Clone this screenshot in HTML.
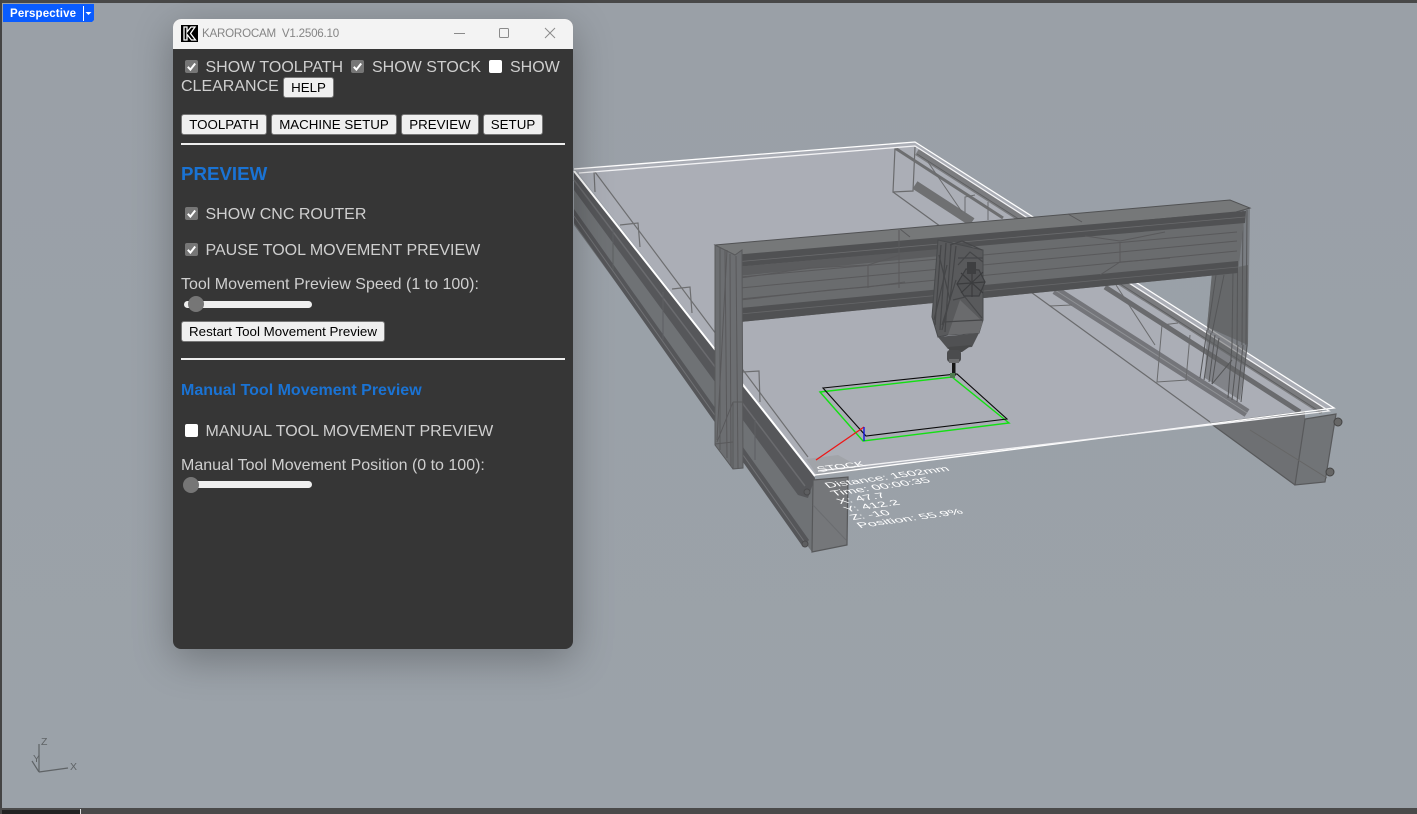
<!DOCTYPE html>
<html><head><meta charset="utf-8"><title>KAROROCAM</title>
<style>
html,body{margin:0;padding:0;width:1417px;height:814px;overflow:hidden;background:#9ba1a8;font-family:"Liberation Sans",Arial,sans-serif}
.abs,.t,.b,.cb{position:absolute}
.t{white-space:nowrap;font-size:16px;line-height:18px;color:#cfcfcf}
.b{box-sizing:border-box;background:#efefef;border:1px solid #767676;border-radius:3px;color:#000;font-size:13.33px;height:20px;line-height:18px;text-align:center;white-space:nowrap}
.cb{width:13px;height:13px;border-radius:2px;background:#767676}
.cb.off{background:#fff}
.cb svg{position:absolute;left:0;top:0}
.track{position:absolute;left:184px;width:128px;height:7px;border-radius:4px;background:#efefef}
.thumb{position:absolute;width:16px;height:16px;border-radius:50%;background:#767676}
hr{position:absolute;left:181px;width:384px;height:2px;margin:0;border:0;background:#eee}
</style></head><body>
<svg class="abs" style="left:0;top:0" width="1417" height="814" viewBox="0 0 1417 814">
<defs>
<linearGradient id="bg" x1="0" y1="0" x2="0" y2="1"><stop offset="0" stop-color="#9aa0a7"/><stop offset="1" stop-color="#9ba2a9"/></linearGradient>
</defs>
<rect width="1417" height="814" fill="url(#bg)"/>
<!-- table top -->
<polygon points="574,168 915,142 1333,408 815,475" fill="#abaeb6"/>
<!-- back right rail -->
<g fill="none" stroke="#6a6b6d">
<polyline points="895,148 893,192 913,191 915,147" stroke-width="1.2"/>
<line x1="893" y1="192" x2="1210" y2="422" stroke-width="1.2"/>
<line x1="895" y1="148" x2="1003" y2="218" stroke-width="3" stroke="#6d6e70"/>
<line x1="1105" y1="287" x2="1300" y2="412" stroke-width="5" stroke="#6a6b6e"/>
<line x1="915" y1="185" x2="972" y2="222" stroke-width="9" stroke="#6f7072"/>
<line x1="1055" y1="290" x2="1247" y2="413" stroke-width="9" stroke="#74757a"/>
<line x1="1055" y1="290" x2="1247" y2="413" stroke-width="1" stroke="#8f9195"/>
<line x1="917" y1="152" x2="1322" y2="411" stroke-width="7" stroke="#7b7c7f"/>
<line x1="917" y1="154" x2="1322" y2="413" stroke-width="1" stroke="#5e5f61"/>
<line x1="928" y1="162" x2="962" y2="212" stroke-width="1"/>
<line x1="1116" y1="285" x2="1155" y2="345" stroke-width="1"/>
<polyline points="965,213 965,197 975,195" stroke-width="1"/>
<line x1="988" y1="202" x2="988" y2="220" stroke-width="1"/>
<polyline points="1050,305 1050,306 1072,305" stroke-width="1"/>
<polyline points="1162,325 1157,382 1187,380" stroke-width="1"/>
<line x1="1162" y1="325" x2="1178" y2="323" stroke-width="1"/>
<line x1="1190" y1="335" x2="1186" y2="380" stroke-width="1"/>
</g>
<!-- right rail below table -->
<polygon points="1210,423 1305,411 1305,420 1295,485" fill="#6e7073"/>
<line x1="1210" y1="423" x2="1295" y2="485" stroke="#58595b" stroke-width="1.2"/>
<polygon points="1305,419 1336,414 1325,482 1295,485" fill="#717477" stroke="#58595b" stroke-width="1.2"/>
<circle cx="1338" cy="422" r="4" fill="#666" stroke="#444"/>
<circle cx="1330" cy="472" r="4" fill="#666" stroke="#444"/>
<line x1="1250" y1="430" x2="1327" y2="478" stroke="#666" stroke-width="1"/>
<!-- left rail -->
<polygon points="574,170 815,478 812,552 574,225" fill="#6f7275"/>
<polygon points="574,172 815,478 808,498 798,495 574,190" fill="#56575a"/>
<line x1="574" y1="180" x2="805" y2="486" stroke="#6a6b6e" stroke-width="1.5"/>
<polygon points="574,209 809,540 803,547 574,223" fill="#555659"/>
<line x1="574" y1="216" x2="806" y2="544" stroke="#707174" stroke-width="1"/>
<polyline points="613,228 613,270" stroke="#5d5f62" fill="none"/>
<polyline points="663,292 663,340" stroke="#5d5f62" fill="none"/>
<polyline points="755,420 755,460" stroke="#5d5f62" fill="none"/>
<polygon points="813,480 848,477 847,545 812,552" fill="#75777a" stroke="#57585a" stroke-width="1.2"/>
<line x1="813" y1="505" x2="846" y2="540" stroke="#6a6c6f"/>
<circle cx="807" cy="492" r="3" fill="#5d5e60" stroke="#4a4a4c"/>
<circle cx="805" cy="544" r="3" fill="#5d5e60" stroke="#4a4a4c"/>
<!-- inner left box lines -->
<g fill="none" stroke="#6d6e70" stroke-width="1.2">
<line x1="595" y1="172" x2="808" y2="457"/>
<polyline points="594,171 595,192"/>
<polyline points="620,225 638,223 640,247"/>
<polyline points="672,289 690,287 692,313"/>
<polyline points="743,372 759,371 760,402"/>
</g>
<!-- stock patch -->
<polygon points="806,459 838,455 865,470 818,476" fill="#a1a4a9"/>
<!-- table white edges -->
<g fill="none" stroke="#fff">
<polyline points="574,169 915,142 1334,408 815,475" stroke-width="1.3"/>
<polyline points="579,173 915,146 1329,411 818,471" stroke-width="1.3" stroke="#f2f2f4"/>
</g>
<line x1="574" y1="171" x2="815" y2="476" stroke="#fff" stroke-width="2"/>
<!-- right leg -->
<polygon points="1236,210 1250,208 1248,345 1240,400 1205,378 1207,327 1212,275" fill="#5f6063" fill-opacity=".55"/>
<polygon points="1212,272 1248,265 1248,345 1207,327" fill="#66686a"/>
<g stroke="#555658" stroke-width="1" fill="none">
<line x1="1238" y1="212" x2="1237" y2="345"/><line x1="1243" y1="210" x2="1242" y2="345"/>
<line x1="1247" y1="210" x2="1246" y2="345"/><line x1="1233" y1="270" x2="1232" y2="345"/>
<line x1="1216" y1="275" x2="1208" y2="330"/><line x1="1224" y1="275" x2="1212" y2="333"/>
<line x1="1207" y1="330" x2="1200" y2="378"/><line x1="1211" y1="333" x2="1204" y2="380"/>
<line x1="1215" y1="335" x2="1209" y2="382"/><line x1="1219" y1="338" x2="1212" y2="384"/>
<line x1="1238" y1="345" x2="1232" y2="400"/><line x1="1243" y1="345" x2="1237" y2="402"/>
<line x1="1247" y1="345" x2="1241" y2="402"/><line x1="1232" y1="345" x2="1228" y2="398"/>
<line x1="1212" y1="384" x2="1232" y2="360"/>
</g>
<!-- gantry beam -->
<polygon points="715,245 1230,200 1250,208 1236,212 735,258" fill="#767879" stroke="#515254"/>
<polygon points="735,258 1245,212 1238,273 740,322" fill="#6a6c6e"/>
<polygon points="733,255 1246,211 1245,223 735,267" fill="#505153"/>
<line x1="735" y1="262" x2="1245" y2="217" stroke="#6a6b6d" stroke-width=".8"/>
<polygon points="735,267 940,249 940,256 737,276" fill="#5b5c5e"/>
<polygon points="740,308 1238,261 1238,273 740,322" fill="#505153"/>
<line x1="740" y1="314" x2="1238" y2="267" stroke="#656668" stroke-width=".8"/>
<g stroke="#59595b" stroke-width="1" fill="none">
<line x1="740" y1="277" x2="1237" y2="232"/><line x1="740" y1="288" x2="1237" y2="241"/>
<line x1="740" y1="299" x2="1237" y2="251"/>
<polyline points="740,278 810,268 868,265 900,255"/>
<polyline points="740,300 830,290 868,287 905,282"/>
<line x1="868" y1="265" x2="868" y2="288"/>
<line x1="899" y1="230" x2="899" y2="288"/>
<line x1="1120" y1="242" x2="1120" y2="262"/>
<polyline points="1085,236 1120,241 1165,232"/>
<polyline points="1100,275 1120,262 1170,258"/>
<line x1="900" y1="229" x2="910" y2="237"/>
<line x1="1068" y1="214" x2="1082" y2="222"/>
</g>
<!-- left leg -->
<polygon points="715,245 735,255 742,250 743,468 733,469 715,445" fill="#6c6e71" stroke="#58595b"/>
<g stroke="#59595b" stroke-width="1" fill="none">
<line x1="720" y1="248" x2="720" y2="450"/><line x1="725" y1="250" x2="727" y2="458"/>
<line x1="730" y1="254" x2="731" y2="466"/><line x1="736" y1="256" x2="738" y2="468"/>
<line x1="727" y1="250" x2="717" y2="440"/><line x1="733" y1="402" x2="743" y2="402"/>
<line x1="733" y1="402" x2="717" y2="442"/><line x1="733" y1="402" x2="733" y2="469"/>
<line x1="715" y1="444" x2="733" y2="442"/>
</g>
<!-- spindle -->
<polygon points="938,240 983,250 983,320 979,333 948,335 938,337 932,317" fill="#595a5c" stroke="#484a4c"/>
<polygon points="960,300 983,322 979,333 948,335" fill="#6a6b6d"/>
<polygon points="938,337 979,333 972,347 948,349" fill="#505153"/>
<polygon points="948,347 972,345 962,352 950,352" fill="#474849"/>
<g stroke="#454648" stroke-width="1.2" fill="none">
<line x1="941" y1="245" x2="935" y2="325"/><line x1="946" y1="243" x2="940" y2="330"/>
<line x1="951" y1="245" x2="945" y2="332"/><line x1="956" y1="246" x2="950" y2="300"/>
<line x1="939" y1="255" x2="950" y2="300"/><line x1="947" y1="265" x2="934" y2="320"/>
<line x1="951" y1="295" x2="942" y2="330"/><line x1="956" y1="280" x2="942" y2="325"/>
<polyline points="953,300 965,297 982,318"/>
<line x1="943" y1="322" x2="982" y2="320"/>
<polyline points="950,245 962,241 982,250"/>
<polyline points="958,265 970,252 983,262"/>
<line x1="958" y1="258" x2="983" y2="258"/>
</g>
<polygon points="966,269 979,270 985,282 979,296 964,296 957,284" fill="#515254" stroke="#3d3e40" stroke-width="1.2"/>
<g stroke="#3b3c3e" stroke-width="1.2"><line x1="957" y1="284" x2="985" y2="282"/><line x1="972" y1="268" x2="972" y2="297"/><line x1="961" y1="273" x2="983" y2="293"/><line x1="983" y1="272" x2="961" y2="293"/></g>
<rect x="967" y="262" width="9" height="12" fill="#3e3f41"/>
<rect x="947" y="350" width="14" height="12" rx="3" fill="#4b4c4e"/>
<rect x="949" y="359" width="10" height="4" fill="#6a6b6d"/>
<rect x="952" y="363" width="3.5" height="13" fill="#161616"/>
<!-- toolpath -->
<polygon points="820,392 952,377 1009,423 863,441" fill="none" stroke="#13e013" stroke-width="1.4"/>
<polygon points="823,388 957,374 1007,419 866,436" fill="none" stroke="#0a0a0a" stroke-width="1.1"/>
<rect x="950" y="373" width="5" height="5" fill="#4e7a4e"/>
<line x1="816" y1="460" x2="864" y2="427" stroke="#ee1515" stroke-width="1.3"/>
<line x1="864" y1="427" x2="864" y2="441" stroke="#1414e0" stroke-width="1.4"/>
<!-- labels -->
<g fill="#fff" font-family="'Liberation Sans',sans-serif" font-size="10.5">
<text transform="matrix(1.3,-.17,.66,.68,820,472)">STOCK</text>
<text transform="matrix(1.4,-.2,.66,.68,828,488)">Distance: 1502mm</text>
<text transform="matrix(1.4,-.2,.66,.68,834,496)">Time: 00:00:35</text>
<text transform="matrix(1.4,-.2,.66,.68,840,504)">X: 47.7</text>
<text transform="matrix(1.4,-.2,.66,.68,847,512)">Y: 412.2</text>
<text transform="matrix(1.4,-.2,.66,.68,853,520)">Z: -10</text>
<text transform="matrix(1.43,-.2,.66,.68,860,528)">Position: 55.9%</text>
</g>
<!-- axis -->
<g stroke="#5f6366" stroke-width="1.2" fill="none"><line x1="39" y1="772" x2="39" y2="744"/><line x1="39" y1="772" x2="68" y2="768"/><line x1="39" y1="772" x2="32" y2="761"/></g>
<g fill="#5f6366" font-family="'Liberation Sans',sans-serif" font-size="10.5"><text x="41" y="745">Z</text><text x="70" y="770">X</text><text x="33" y="762">Y</text></g>
<!-- frame -->
<rect x="0" y="0" width="1417" height="3" fill="#484848"/>
<rect x="0" y="0" width="2" height="814" fill="#444"/>
<rect x="0" y="808" width="1417" height="6" fill="#4a4a4a"/>
<rect x="2" y="810" width="78" height="4" fill="#222"/>
<rect x="80" y="809" width="1" height="5" fill="#ddd"/>
<!-- perspective tab -->
<path d="M3 4H94V20L92 22H3Z" fill="#0a5cff"/>
<rect x="83" y="6" width="1" height="15" fill="#fff"/>
<polygon points="85.5,12 91.5,12 88.5,15" fill="#fff"/>
</svg>
<div class="t" style="left:10px;top:7px;font-size:11.5px;line-height:14px;color:#fff;font-weight:700;letter-spacing:.15px">Perspective</div>

<!-- window -->
<div class="abs" style="left:173px;top:19px;width:400px;height:630px;background:#363636;border-radius:8px;box-shadow:0 10px 40px rgba(0,0,0,.28);overflow:hidden">
  <div class="abs" style="left:0;top:0;width:400px;height:30px;background:#f3f3f3"></div>
</div>
<svg class="abs" style="left:181px;top:25px" width="17" height="17" viewBox="0 0 17 17">
<rect width="17" height="17" fill="#000"/>
<path d="M3 2H6V7L10 2H14L9.5 8.5L14.5 15H10.5L6 9.5V15H3Z" fill="#000" stroke="#fff" stroke-width="1.3"/>
</svg>
<div class="t" style="left:202px;top:26px;font-size:11.6px;line-height:15px;color:#858585;white-space:pre;letter-spacing:-.23px">KAROROCAM  V1.2506.10</div>
<svg class="abs" style="left:450px;top:24px" width="110" height="18" viewBox="0 0 110 18">
<line x1="4" y1="9.5" x2="15" y2="9.5" stroke="#8a8a8a"/>
<rect x="49.5" y="4.5" width="9" height="9" rx="1" fill="none" stroke="#8a8a8a"/>
<path d="M95 4L105 14M105 4L95 14" stroke="#8a8a8a" fill="none"/>
</svg>

<span class="cb" style="left:185px;top:60px"><svg width="13" height="13"><path d="M2.8 6.8L5.4 9.6L10.2 3.5" stroke="#fff" stroke-width="2" fill="none"/></svg></span>
<div class="t" style="left:205.5px;top:58.5px">SHOW TOOLPATH</div>
<span class="cb" style="left:351px;top:60px"><svg width="13" height="13"><path d="M2.8 6.8L5.4 9.6L10.2 3.5" stroke="#fff" stroke-width="2" fill="none"/></svg></span>
<div class="t" style="left:372px;top:58.5px">SHOW STOCK</div>
<span class="cb off" style="left:489px;top:60px"></span>
<div class="t" style="left:510px;top:58.5px">SHOW</div>
<div class="t" style="left:181px;top:78px">CLEARANCE</div>
<div class="b" style="left:283px;top:77px;width:51px;height:21px;font-size:13.33px;line-height:19px">HELP</div>

<div class="b" style="left:181px;top:114px;width:86px;height:21px;line-height:19px">TOOLPATH</div>
<div class="b" style="left:271px;top:114px;width:126px;height:21px;line-height:19px">MACHINE SETUP</div>
<div class="b" style="left:401px;top:114px;width:78px;height:21px;line-height:19px">PREVIEW</div>
<div class="b" style="left:483px;top:114px;width:60px;height:21px;line-height:19px">SETUP</div>
<hr style="top:143px">

<div class="t" style="left:181px;top:163px;font-size:18.72px;line-height:21px;font-weight:700;color:#1a73d4">PREVIEW</div>

<span class="cb" style="left:185px;top:207px"><svg width="13" height="13"><path d="M2.8 6.8L5.4 9.6L10.2 3.5" stroke="#fff" stroke-width="2" fill="none"/></svg></span>
<div class="t" style="left:205.5px;top:206px">SHOW CNC ROUTER</div>
<span class="cb" style="left:185px;top:243px"><svg width="13" height="13"><path d="M2.8 6.8L5.4 9.6L10.2 3.5" stroke="#fff" stroke-width="2" fill="none"/></svg></span>
<div class="t" style="left:205.5px;top:242px">PAUSE TOOL MOVEMENT PREVIEW</div>
<div class="t" style="left:181px;top:276px">Tool Movement Preview Speed (1 to 100):</div>
<div class="track" style="top:301px"></div>
<div class="thumb" style="left:188px;top:296px"></div>
<div class="b" style="left:181px;top:321px;width:204px;height:21px;font-size:13.33px;line-height:19px">Restart Tool Movement Preview</div>
<hr style="top:358px">
<div class="t" style="left:181px;top:382px;font-weight:700;color:#1a73d4">Manual Tool Movement Preview</div>
<span class="cb off" style="left:185px;top:424px"></span>
<div class="t" style="left:205.5px;top:423px">MANUAL TOOL MOVEMENT PREVIEW</div>
<div class="t" style="left:181px;top:457px">Manual Tool Movement Position (0 to 100):</div>
<div class="track" style="top:481px"></div>
<div class="thumb" style="left:183px;top:477px"></div>
</body></html>
